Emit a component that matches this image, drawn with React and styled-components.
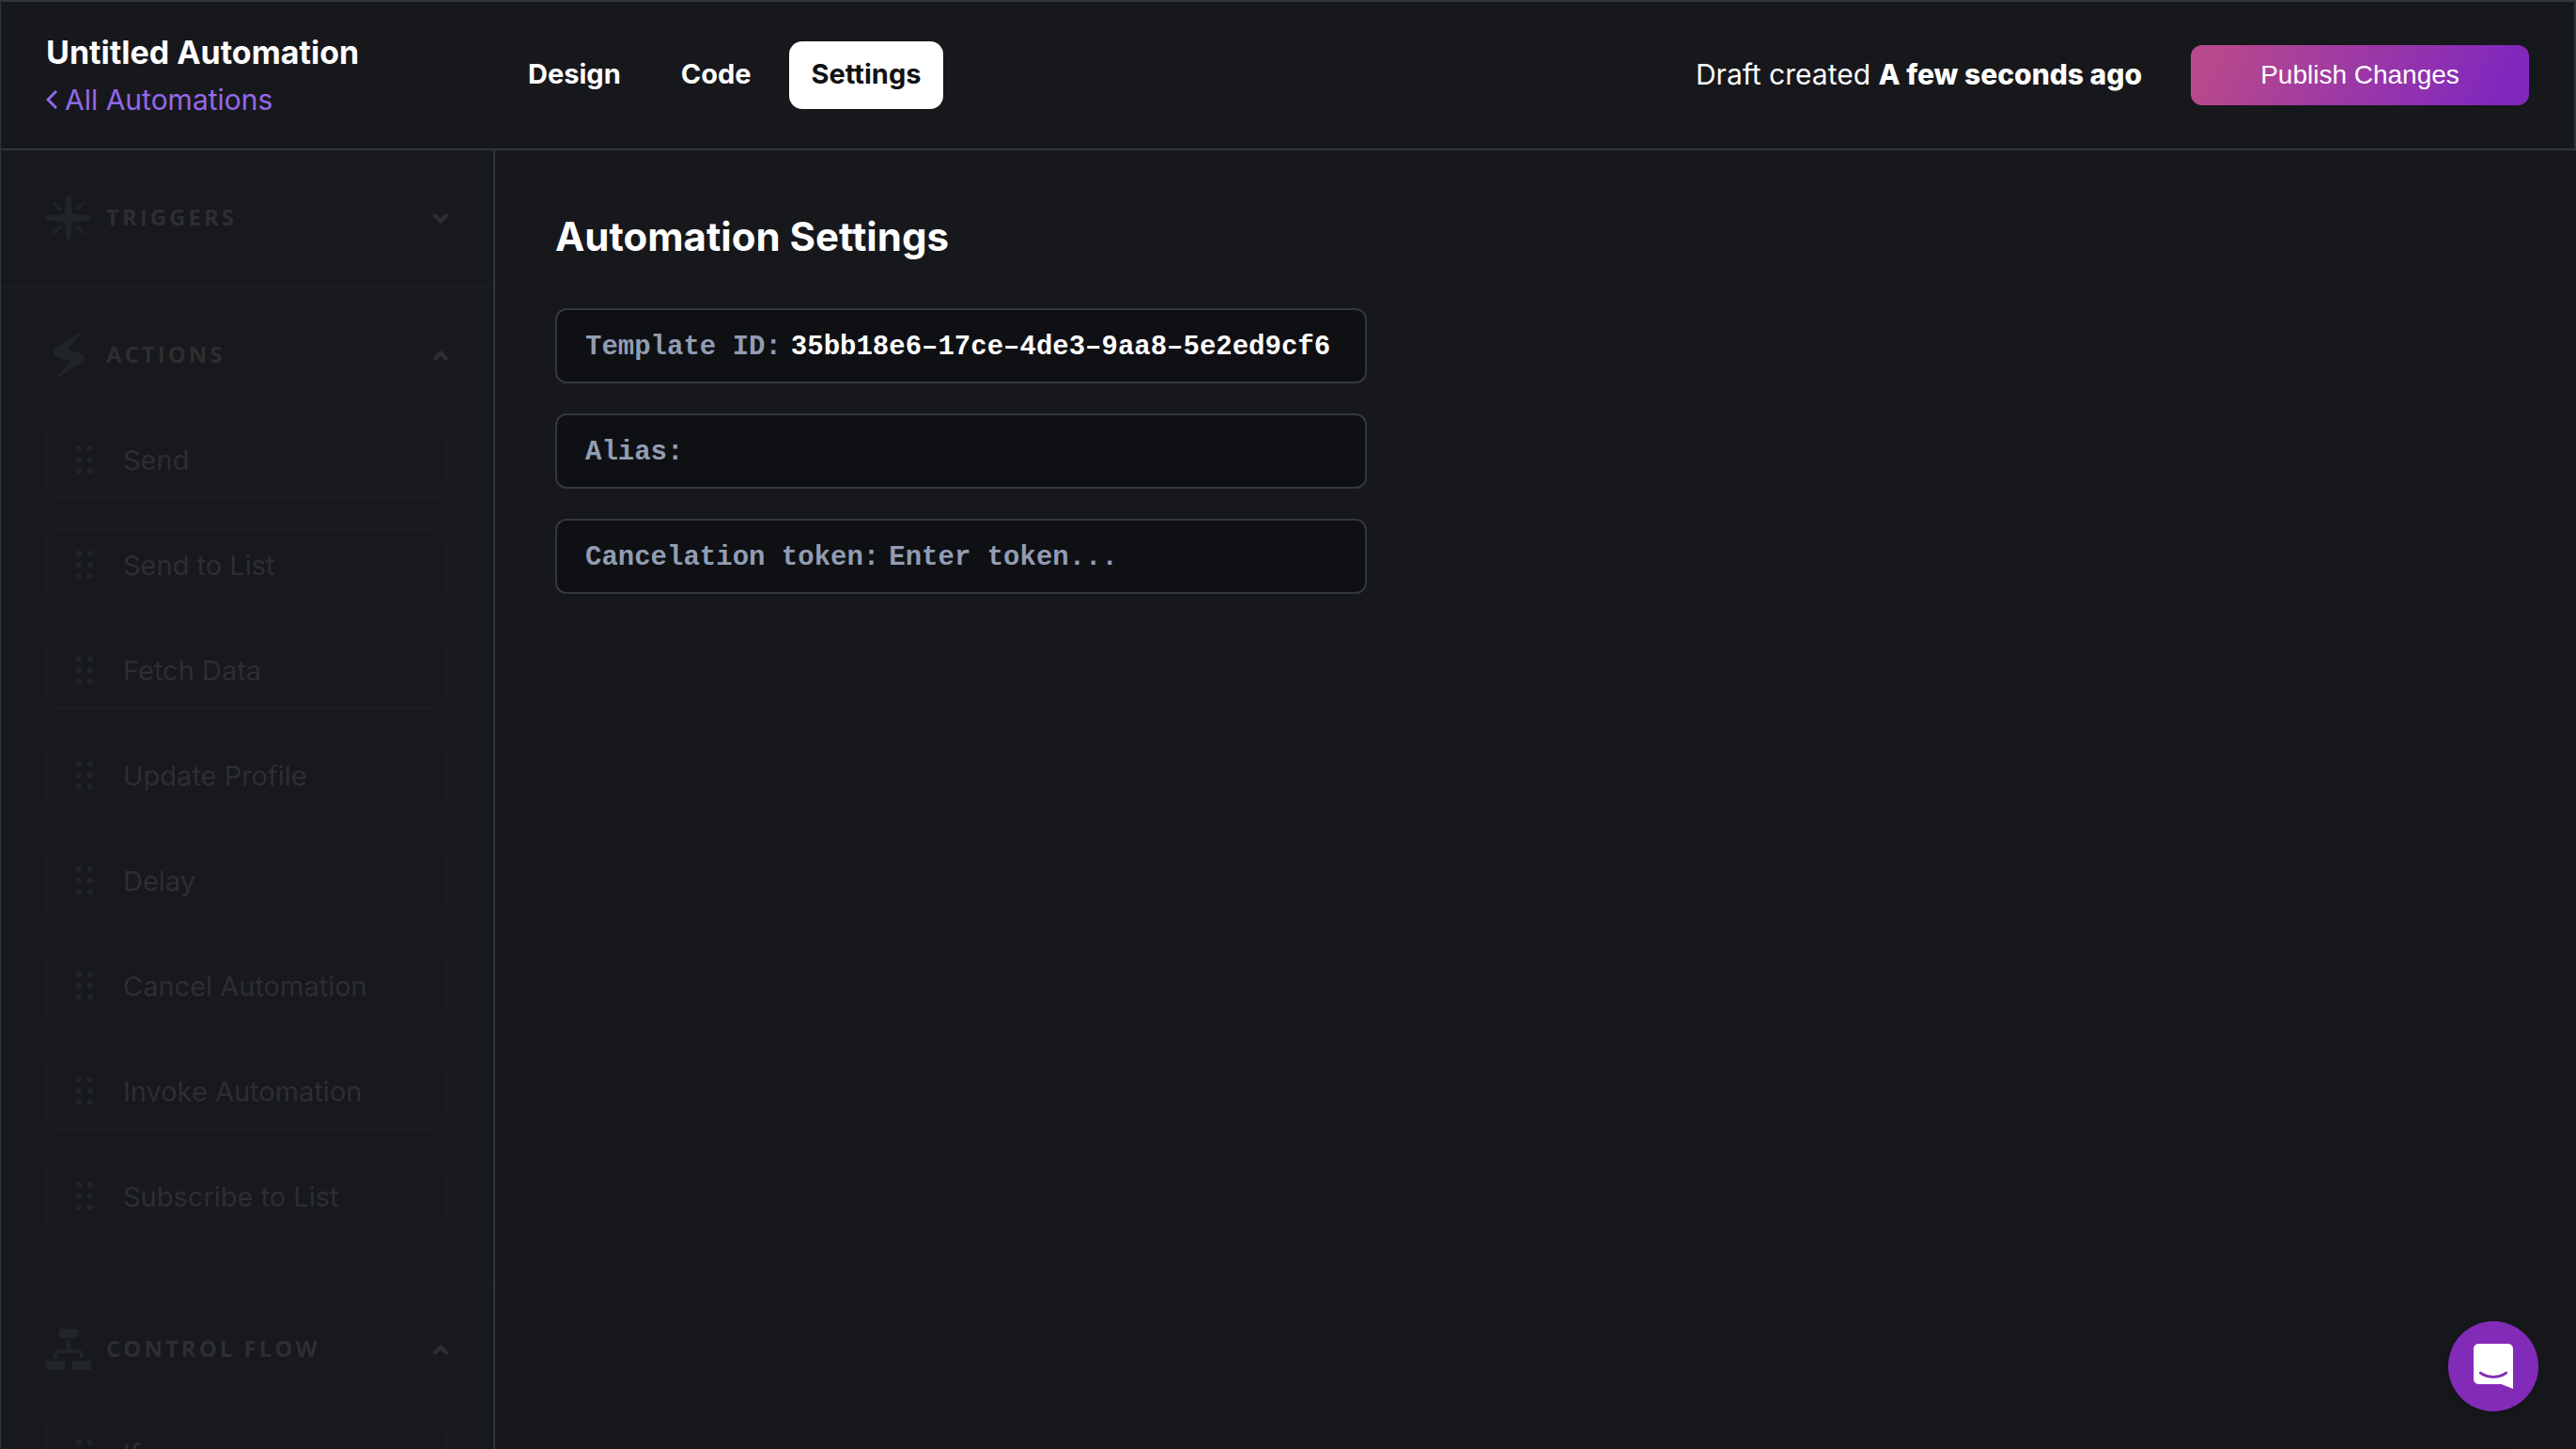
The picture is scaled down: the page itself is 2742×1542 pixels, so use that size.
import React from "react";
import styled, { createGlobalStyle } from "styled-components";

const sans = `Inter, "Open Sans", "Liberation Sans", sans-serif`;
const mono = `"Liberation Mono", "DejaVu Sans Mono", monospace`;
const line = "#2f373e";

const GlobalStyle = createGlobalStyle`
  *, *::before, *::after { box-sizing: border-box; }
  body { margin: 0; background: #17181c; color: #fff; font-family: ${sans}; font-size: 28px; }
  button, input { font: inherit; }
  svg { display: block; flex: none; }
`;

const Page = styled.div`
  display: flex;
  flex-direction: column;
  height: 100vh;
  overflow: hidden;
  border-left: 1px solid ${line};
`;

const Header = styled.header`
  flex: none;
  display: flex;
  align-items: center;
  height: 160px;
  padding-right: 48px;
  border: 2px solid ${line};
  border-left: 0;
`;

const Brand = styled.div`
  width: 537px;
  padding: 2px 0 0 48px;
`;

const Title = styled.h1`
  margin: 0;
  font-size: 34px;
  line-height: 50px;
  font-weight: 700;
`;

const BackLink = styled.a`
  display: flex;
  align-items: center;
  gap: 8px;
  font-size: 30px;
  line-height: 50px;
  color: #9468ea;
  text-decoration: none;
`;

const Tabs = styled.nav`
  display: flex;
  gap: 16px;
`;

const Tab = styled.a`
  padding: 0 24px 2px;
  border-radius: 14px;
  font-size: 29px;
  line-height: 70px;
  font-weight: 700;
  text-decoration: none;
  color: ${(p) => (p.$active ? "#111214" : "#fff")};
  background: ${(p) => (p.$active ? "#fff" : "transparent")};
`;

const Status = styled.p`
  margin: 0 52px 0 auto;
  padding-bottom: 2px;
  font-size: 30px;
  b { font-weight: 800; }
`;

const PublishButton = styled.button`
  width: 360px;
  height: 64px;
  padding: 0;
  border: 0;
  border-radius: 12px;
  color: #fff;
  font-family: "Liberation Sans", Arial, sans-serif;
  background: linear-gradient(116deg, #b6488d 10%, #8229bd 88%);
`;

const Body = styled.div`
  flex: 1;
  display: flex;
  min-height: 0;
`;

const Sidebar = styled.aside`
  flex: none;
  width: 526px;
  overflow: hidden;
  border-right: 2px solid ${line};
  background: #17191c;
  color: #2d2e30;
`;

const Section = styled.section`
  border-bottom: 2px solid #1b1c20;
  padding: 0 48px ${(p) => (p.$open ? 48 : 0)}px;
`;

const SectionToggle = styled.button`
  display: flex;
  align-items: center;
  gap: 16px;
  width: 100%;
  height: 144px;
  padding: 0;
  border: 0;
  background: none;
  color: inherit;
  font-family: "Open Sans", sans-serif;
  font-size: 24px;
  font-weight: 700;
  letter-spacing: 3px;
  text-transform: uppercase;
  text-align: left;
  span { flex: 1; padding-bottom: 4px; }
`;

const Steps = styled.ul`
  display: grid;
  gap: 32px;
  margin: 0;
  padding: 0;
  list-style: none;
`;

const Step = styled.li`
  display: flex;
  align-items: center;
  gap: 32px;
  height: 80px;
  padding: 0 30px 2px;
  border: 2px solid #1b1c20;
  border-radius: 12px;
  font-size: 29px;
`;

const Main = styled.main`
  flex: 1;
  padding: 64px;
`;

const Heading = styled.h2`
  margin: 0 0 48px;
  font-size: 42px;
  line-height: 56px;
  font-weight: 700;
`;

const Form = styled.form`
  display: grid;
  gap: 32px;
  max-width: 864px;
`;

const Field = styled.label`
  display: flex;
  align-items: center;
  gap: 10px;
  height: 80px;
  padding: 2px 24px 0 30px;
  border: 2px solid #33383e;
  border-radius: 12px;
  background: #0f1014;
  color: #919db3;
  font-family: ${mono};
  font-size: 29px;
  font-weight: 700;
  white-space: nowrap;
`;

const FieldInput = styled.input`
  flex: 1;
  min-width: 0;
  padding: 0;
  border: 0;
  outline: 0;
  background: none;
  color: #fff;
  &::placeholder { color: #919db3; opacity: 1; }
`;

const Messenger = styled.button`
  position: fixed;
  right: 40px;
  bottom: 40px;
  display: grid;
  place-items: center;
  width: 96px;
  height: 96px;
  padding: 0;
  border: 0;
  border-radius: 50%;
  background: #832bb9;
  box-shadow: 0 2px 12px rgba(0, 0, 0, 0.1), 0 4px 48px rgba(0, 0, 0, 0.1);
`;

const StarIcon = () => (
  <svg width="48" height="48" viewBox="0 0 48 48" fill="#21252a">
    <path d="M24 0c1.500 0 2.400 1 2.500 2.400l1.500 15.700c.1 1.200.7 1.800 1.900 1.900l15.700 1.500c1.400.1 2.400 1 2.400 2.500s-1 2.400-2.400 2.500l-15.700 1.500c-1.200.1-1.800.7-1.900 1.900l-1.500 15.700C26.400 47 25.500 48 24 48s-2.400-1-2.500-2.400l-1.500-15.700c-.1-1.200-.7-1.800-1.900-1.900l-15.700-1.500C1 26.400 0 25.500 0 24s1-2.400 2.400-2.500l15.700-1.500c1.200-.1 1.800-.7 1.900-1.900l1.500-15.700C21.600 1 22.500 0 24 0z" />
    <path d="M7.400 7.400c.5-.5 1.200-.5 1.800 0l6.300 5.200c1 .9 1.100 2.100.3 2.900s-2 .7-2.900-.3L7.400 9.200c-.5-.6-.5-1.300 0-1.800z" />
    <path d="M40.600 7.400c-.5-.5-1.200-.5-1.800 0l-6.300 5.200c-1 .9-1.100 2.100-.3 2.900s2 .7 2.900-.3l5.200-6c.5-.6.5-1.300 0-1.800z" />
    <path d="M7.400 40.600c.5.500 1.200.5 1.800 0l6.300-5.200c1-.9 1.100-2.100.3-2.900s-2-.7-2.900.3l-5.500 6c-.5.600-.5 1.300 0 1.800z" />
    <path d="M40.600 40.600c-.5.500-1.200.5-1.800 0l-6.300-5.200c-1-.9-1.100-2.100-.3-2.900s2-.7 2.900.3l5.500 6c.5.600.5 1.300 0 1.800z" />
  </svg>
);

const BoltIcon = () => (
  <svg width="48" height="48" viewBox="0 0 48 48" fill="#21252a">
    <path d="M34.200 1.100c1-.7 2 .3 1.300 1.300L23.500 17.300l13.800 5.200c4.100 1.600 4.300 6.600.8 8.900L14 46.700c-1 .6-2-.4-1.300-1.300L25.400 30.600 10.800 25.300c-3.900-1.500-4.100-6.300-.8-8.500z" />
  </svg>
);

const FlowIcon = () => (
  <svg width="48" height="48" viewBox="0 0 48 48" fill="#21252a">
    <rect x="14" y="2" width="20" height="10" rx="2" />
    <rect x="0" y="36" width="20" height="10" rx="2" />
    <rect x="28" y="36" width="20" height="10" rx="2" />
    <path d="M24 16v7c0 2-1 3-3 3h-6c-3 0-5 1-5 4v2M24 16v7c0 2 1 3 3 3h6c3 0 5 1 5 4v2" fill="none" stroke="#21252a" strokeWidth="4" strokeLinecap="round" />
  </svg>
);

const Caret = ({ up }) => (
  <svg width="16" height="11" viewBox="0 0 16 11" fill="none" stroke="currentColor" strokeWidth="4.500" strokeLinecap="round" strokeLinejoin="round">
    <path d={up ? "M2.300 8.300L8 2.700l5.700 5.600" : "M2.300 2.700L8 8.300l5.700-5.600"} />
  </svg>
);

const BackIcon = () => (
  <svg width="12" height="20" viewBox="0 0 12 20" fill="none" stroke="currentColor" strokeWidth="3">
    <path d="M11 1L2 10l9 9" />
  </svg>
);

const Grip = () => (
  <svg width="18" height="30" viewBox="0 0 18 30" fill="#21252a">
    {[3, 15, 27].map((y) => [3, 15].map((x) => <circle key={`${x}-${y}`} cx={x} cy={y} r="3" />))}
  </svg>
);

const ChatIcon = () => (
  <svg width="42" height="48" viewBox="0 0 28 32" fill="#fff">
    <path d="M28 32s-4.714-1.855-8.527-3.340H3.437C1.540 28.660 0 27.026 0 25.013V3.644C0 1.633 1.540 0 3.437 0h21.125c1.898 0 3.437 1.632 3.437 3.645v18.404H28V32zm-4.139-11.982a.88.88 0 00-1.292-.105c-.03.026-3.015 2.681-8.570 2.681-5.486 0-8.517-2.636-8.571-2.684a.88.88 0 00-1.290.107 1.010 1.010 0 00-.219.708.992.992 0 00.318.664c.142.128 3.537 3.150 9.762 3.150 6.226 0 9.621-3.022 9.763-3.150a.992.992 0 00.317-.664 1.010 1.010 0 00-.218-.707z" />
  </svg>
);

const sections = [
  { name: "Triggers", Icon: StarIcon, steps: [] },
  {
    name: "Actions",
    Icon: BoltIcon,
    steps: ["Send", "Send to List", "Fetch Data", "Update Profile", "Delay", "Cancel Automation", "Invoke Automation", "Subscribe to List"],
  },
  { name: "Control Flow", Icon: FlowIcon, steps: ["If"] },
];

const tabs = ["Design", "Code", "Settings"];

export default function App() {
  return (
    <Page>
      <GlobalStyle />
      <Header>
        <Brand>
          <Title>Untitled Automation</Title>
          <BackLink href="#automations">
            <BackIcon />
            All Automations
          </BackLink>
        </Brand>
        <Tabs>
          {tabs.map((t) => (
            <Tab key={t} href={`#${t.toLowerCase()}`} $active={t === "Settings"}>
              {t}
            </Tab>
          ))}
        </Tabs>
        <Status>
          Draft created <b>A few seconds ago</b>
        </Status>
        <PublishButton type="button">Publish Changes</PublishButton>
      </Header>
      <Body>
        <Sidebar>
          {sections.map(({ name, Icon, steps }) => (
            <Section key={name} $open={steps.length > 0}>
              <SectionToggle type="button" aria-expanded={steps.length > 0}>
                <Icon />
                <span>{name}</span>
                <Caret up={steps.length > 0} />
              </SectionToggle>
              {steps.length > 0 && (
                <Steps>
                  {steps.map((s) => (
                    <Step key={s}>
                      <Grip />
                      {s}
                    </Step>
                  ))}
                </Steps>
              )}
            </Section>
          ))}
        </Sidebar>
        <Main>
          <Heading>Automation Settings</Heading>
          <Form>
            <Field>
              Template ID:
              <FieldInput readOnly value="35bb18e6–17ce–4de3–9aa8–5e2ed9cf6" />
            </Field>
            <Field>
              Alias:
              <FieldInput />
            </Field>
            <Field>
              Cancelation token:
              <FieldInput placeholder="Enter token..." />
            </Field>
          </Form>
        </Main>
      </Body>
      <Messenger type="button" aria-label="Open chat">
        <ChatIcon />
      </Messenger>
    </Page>
  );
}
